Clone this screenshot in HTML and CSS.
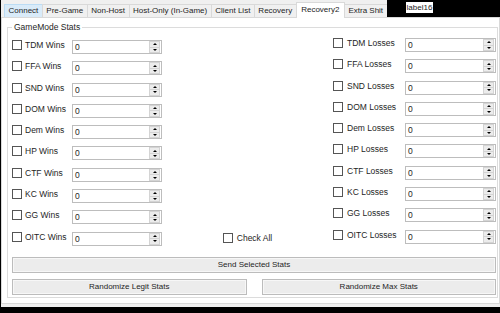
FILE: index.html
```html
<!DOCTYPE html>
<html lang="en">
<head>
  <meta charset="UTF-8" />
  <title>Recovery2</title>
  <link rel="stylesheet" href="styles.css">
</head>
<body>
  <div class="form">
    <div class="topbar">
      <div class="tabs">
        <div class="tab hover">Connect</div>
        <div class="tab">Pre-Game</div>
        <div class="tab">Non-Host</div>
        <div class="tab">Host-Only (In-Game)</div>
        <div class="tab">Client List</div>
        <div class="tab">Recovery</div>
        <div class="tab active">Recovery2</div>
        <div class="tab">Extra Shit</div>
      </div>
      <div class="blackbar">
        <span class="label16">label16</span>
      </div>
    </div>

    <div class="page">
      <fieldset class="group">
        <legend>GameMode Stats</legend>

        <div class="stats">
          <div class="col left">
            <div class="row"><span class="check"></span><span class="name">TDM Wins</span><div class="num"><span class="val">0</span><span class="spin"><i class="up"></i><i class="down"></i></span></div></div>
            <div class="row"><span class="check"></span><span class="name">FFA Wins</span><div class="num"><span class="val">0</span><span class="spin"><i class="up"></i><i class="down"></i></span></div></div>
            <div class="row"><span class="check"></span><span class="name">SND Wins</span><div class="num"><span class="val">0</span><span class="spin"><i class="up"></i><i class="down"></i></span></div></div>
            <div class="row"><span class="check"></span><span class="name">DOM Wins</span><div class="num"><span class="val">0</span><span class="spin"><i class="up"></i><i class="down"></i></span></div></div>
            <div class="row"><span class="check"></span><span class="name">Dem Wins</span><div class="num"><span class="val">0</span><span class="spin"><i class="up"></i><i class="down"></i></span></div></div>
            <div class="row"><span class="check"></span><span class="name">HP Wins</span><div class="num"><span class="val">0</span><span class="spin"><i class="up"></i><i class="down"></i></span></div></div>
            <div class="row"><span class="check"></span><span class="name">CTF Wins</span><div class="num"><span class="val">0</span><span class="spin"><i class="up"></i><i class="down"></i></span></div></div>
            <div class="row"><span class="check"></span><span class="name">KC Wins</span><div class="num"><span class="val">0</span><span class="spin"><i class="up"></i><i class="down"></i></span></div></div>
            <div class="row"><span class="check"></span><span class="name">GG Wins</span><div class="num"><span class="val">0</span><span class="spin"><i class="up"></i><i class="down"></i></span></div></div>
            <div class="row"><span class="check"></span><span class="name">OITC Wins</span><div class="num"><span class="val">0</span><span class="spin"><i class="up"></i><i class="down"></i></span></div></div>
          </div>

          <div class="col middle">
            <div class="checkall"><span class="check"></span><span>Check All</span></div>
          </div>

          <div class="col right">
            <div class="row"><span class="check"></span><span class="name">TDM Losses</span><div class="num"><span class="val">0</span><span class="spin"><i class="up"></i><i class="down"></i></span></div></div>
            <div class="row"><span class="check"></span><span class="name">FFA Losses</span><div class="num"><span class="val">0</span><span class="spin"><i class="up"></i><i class="down"></i></span></div></div>
            <div class="row"><span class="check"></span><span class="name">SND Losses</span><div class="num"><span class="val">0</span><span class="spin"><i class="up"></i><i class="down"></i></span></div></div>
            <div class="row"><span class="check"></span><span class="name">DOM Losses</span><div class="num"><span class="val">0</span><span class="spin"><i class="up"></i><i class="down"></i></span></div></div>
            <div class="row"><span class="check"></span><span class="name">Dem Losses</span><div class="num"><span class="val">0</span><span class="spin"><i class="up"></i><i class="down"></i></span></div></div>
            <div class="row"><span class="check"></span><span class="name">HP Losses</span><div class="num"><span class="val">0</span><span class="spin"><i class="up"></i><i class="down"></i></span></div></div>
            <div class="row"><span class="check"></span><span class="name">CTF Losses</span><div class="num"><span class="val">0</span><span class="spin"><i class="up"></i><i class="down"></i></span></div></div>
            <div class="row"><span class="check"></span><span class="name">KC Losses</span><div class="num"><span class="val">0</span><span class="spin"><i class="up"></i><i class="down"></i></span></div></div>
            <div class="row"><span class="check"></span><span class="name">GG Losses</span><div class="num"><span class="val">0</span><span class="spin"><i class="up"></i><i class="down"></i></span></div></div>
            <div class="row"><span class="check"></span><span class="name">OITC Losses</span><div class="num"><span class="val">0</span><span class="spin"><i class="up"></i><i class="down"></i></span></div></div>
          </div>
        </div>

        <div class="btn send">Send Selected Stats</div>
        <div class="btn-row">
          <div class="btn">Randomize Legit Stats</div>
          <div class="btn">Randomize Max Stats</div>
        </div>
      </fieldset>
    </div>
  </div>
</body>
</html>
```

FILE: styles.css
```css
* {
  box-sizing: border-box;
}

body {
  margin: 0;
  width: 500px;
  height: 313px;
  background: #000;
  font-family: "Liberation Sans", Arial, sans-serif;
  font-size: 8.5px;
  color: #1e1e1e;
  overflow: hidden;
}

.form {
  margin-left: 1px;
  width: 499px;
  height: 307px;
  background: #f0f0f0;
  display: flex;
  flex-direction: column;
}

/* tab strip */
.topbar {
  display: flex;
  height: 17px;
}

.tabs {
  display: flex;
  align-items: flex-end;
  padding-left: 3px;
  font-size: 8px;
}

.tab {
  height: 13px;
  line-height: 12px;
  padding: 0 3.5px;
  margin-right: -1px;
  border: 1px solid #d9d9d9;
  border-bottom: none;
  background: #f0f0f0;
  white-space: nowrap;
}

.tab.hover {
  background: #d9ebf9;
  border-color: #bcdcf4;
}

.tab.active {
  height: 16px;
  line-height: 14px;
  margin-bottom: -1px;
  padding: 0 4.5px;
  background: #fff;
  position: relative;
  z-index: 1;
}

.blackbar {
  flex: 1;
  background: #000;
  padding: 2px 0 0 19px;
}

.label16 {
  display: inline-block;
  height: 11px;
  line-height: 11px;
  padding: 0 1px;
  background: #fff;
  font-size: 8px;
}

/* tab page */
.page {
  flex: 1;
  margin-bottom: 3px;
  background: #fff;
  border: 1px solid #d9d9d9;
  padding: 4px 1px 0 5px;
}

.group {
  margin: 0;
  padding: 0 1px 2px 4px;
  border: 1px solid #dcdcdc;
  height: 276px;
}

.group legend {
  padding: 0 2px;
  line-height: 10px;
}

.stats {
  display: grid;
  grid-template-columns: 150px 1fr 163px;
  height: 221px;
}

.col {
  display: flex;
  flex-direction: column;
}

.col.left {
  padding-top: 8px;
}

.col.right {
  padding-top: 6px;
}

.col.middle {
  justify-content: flex-end;
  align-items: center;
  padding-bottom: 10px;
}

.row {
  display: flex;
  align-items: flex-start;
  height: 21.3px;
}

.check {
  width: 10px;
  height: 10px;
  border: 1px solid #555;
  background: #fff;
  flex-shrink: 0;
}

.name {
  flex: 1;
  line-height: 10px;
  padding-left: 3px;
  white-space: nowrap;
}

.right .name {
  padding-left: 4px;
}

.num {
  width: 90px;
  height: 14px;
  border: 1px solid #bdbdbd;
  background: #fff;
  display: flex;
  align-items: center;
  justify-content: space-between;
  padding: 0 1px 0 2px;
}

.right .num {
  width: 91px;
}

.spin {
  width: 11px;
  height: 12px;
  display: flex;
  flex-direction: column;
}

.spin i {
  flex: 1;
  display: flex;
  align-items: center;
  justify-content: center;
  background: #ececec;
  border: 1px solid #d4d4d4;
}

.spin i + i {
  border-top: none;
}

.spin i::before {
  content: "";
  width: 0;
  height: 0;
  border-left: 2px solid transparent;
  border-right: 2px solid transparent;
}

.spin .up::before {
  border-bottom: 2px solid #000;
}

.spin .down::before {
  border-top: 2px solid #000;
}

.checkall {
  display: flex;
  align-items: center;
  gap: 4px;
  line-height: 10px;
}

/* buttons */
.btn {
  height: 16px;
  line-height: 14px;
  text-align: center;
  font-size: 8px;
  background: #ececec;
  border: 1px solid #bcbcbc;
  box-shadow: inset 0 0 0 1px #f7f7f7;
}

.send {
  margin-top: 4px;
}

.btn-row {
  display: flex;
  gap: 15px;
  margin-top: 6px;
}

.btn-row .btn {
  flex: 1;
}
```
